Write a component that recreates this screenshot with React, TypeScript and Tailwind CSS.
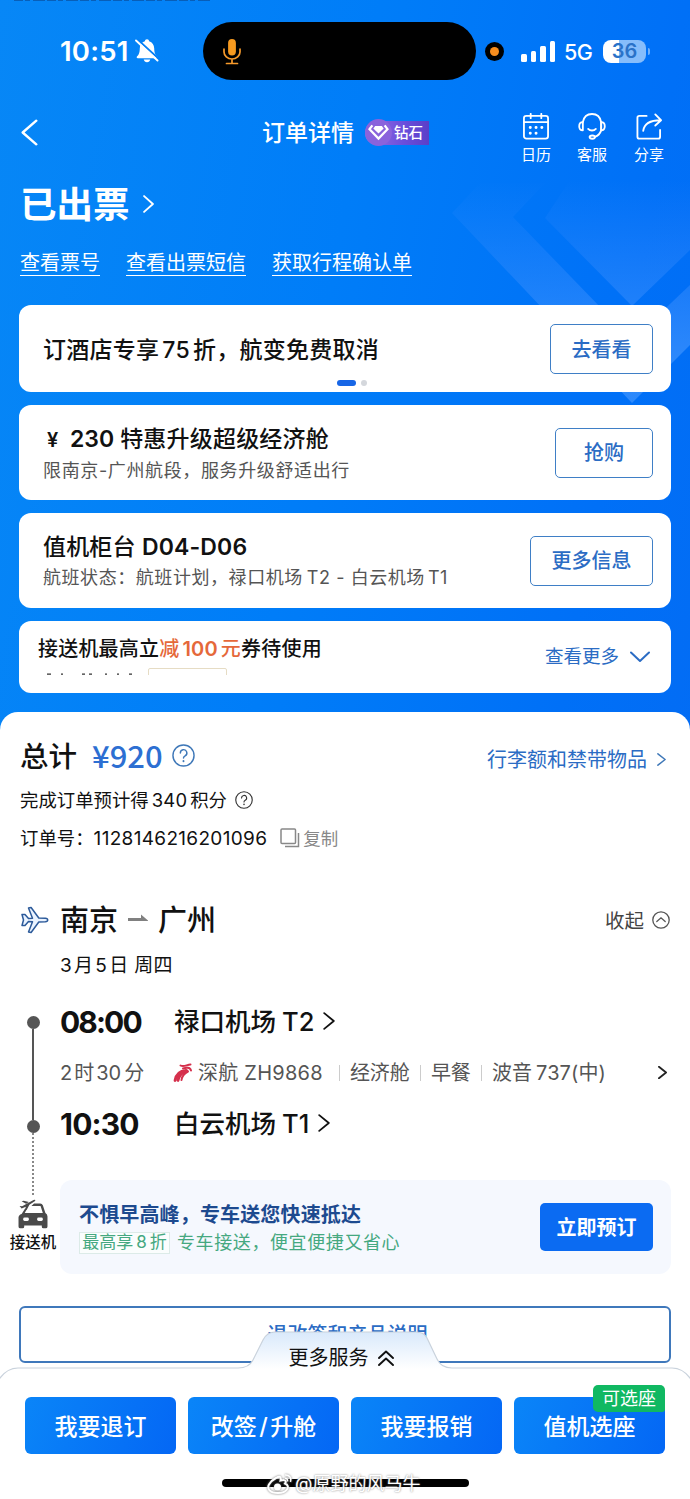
import type { ReactNode } from "react";

const chevronPaths = {
  left: "M9 1 L1 8 L9 15",
  right: "M1 1 L9 8 L1 15",
};

function Chevron({ dir = "right", className, stroke = 1.5 }: { dir?: "left" | "right"; className: string; stroke?: number }) {
  return (
    <svg viewBox="0 0 10 16" preserveAspectRatio="none" className={className} fill="none" stroke="currentColor" strokeWidth={stroke} strokeLinecap="round" strokeLinejoin="round">
      <path d={chevronPaths[dir]} vectorEffect="non-scaling-stroke" />
    </svg>
  );
}

function Question({ className }: { className: string }) {
  return (
    <svg viewBox="0 0 24 24" className={className} fill="none" stroke="currentColor" strokeWidth="1.5" strokeLinecap="round">
      <circle cx="12" cy="12" r="11" />
      <path d="M8.7 9.3 a3.4 3.4 0 1 1 5 3 c-1.2 .7 -1.7 1.2 -1.7 2.4" />
      <path d="M12 17.8 v.2" strokeWidth="2" />
    </svg>
  );
}

function StatusBar() {
  return (
    <div className="mt-[22px] flex h-[58px] items-center pl-[60px] text-white">
      <span className="w-[75px] text-[27.5px] font-semibold leading-8 tracking-[0.2px]">10:51</span>
      <svg viewBox="0 0 24 26" className="h-[26px] w-[24px]">
        <path d="M12 1.2 c1.3 0 2 .9 2.1 2 c3.4 1 5 3.700 5.1 7 c.1 4.500 .9 6.300 2.700 8.100 c.9 .9 .4 1.900 -.7 1.900 H2.800 c-1.100 0 -1.600 -1 -.7 -1.900 c1.800 -1.800 2.600 -3.600 2.700 -8.100 c.1 -3.300 1.700 -6 5.100 -7 c.1 -1.100 .8 -2 2.100 -2z" fill="white" />
        <path d="M8.700 21.600 h6.600 c-.4 1.600 -1.600 2.600 -3.300 2.600 s-2.900 -1 -3.300 -2.600z" fill="white" />
        <path d="M2.500 1.500 L24 21" stroke="#0580f7" strokeWidth="2" />
        <path d="M1 2.500 L22.500 22.500" stroke="white" strokeWidth="1.900" strokeLinecap="round" />
      </svg>
      <div className="ml-[44px] flex h-[58px] w-[273px] items-center rounded-full bg-black pl-[20px]">
        <svg viewBox="0 0 18 27" className="h-[27px] w-[18px]" fill="none" stroke="#f79a2b" strokeWidth="1.7" strokeLinecap="round">
          <rect x="5.100" y="1" width="7.800" height="16.500" rx="3.900" fill="#f79a1f" stroke="none" />
          <path d="M1 11 v3 a8 7 0 0 0 16 0 v-3 M9 21 v4 M3.500 25.500 h11" />
        </svg>
      </div>
      <div className="ml-[9px] flex size-[19px] items-center justify-center rounded-full bg-black">
        <div className="size-[9px] rounded-full bg-[#f78d1e]" />
      </div>
      <div className="ml-[17px] flex h-[21px] items-end gap-[4px]">
        <div className="h-[8px] w-[5.500px] rounded-[1.500px] bg-white" />
        <div className="h-[11px] w-[5.500px] rounded-[1.500px] bg-white" />
        <div className="h-[16px] w-[5.500px] rounded-[1.500px] bg-white" />
        <div className="h-[21px] w-[5.500px] rounded-[1.500px] bg-white" />
      </div>
      <span className="ml-[9px] w-[39px] pt-[2px] text-[21.500px] font-medium leading-7 tracking-[-0.500px]">5G</span>
      <div className="flex h-[23px] w-[43px] items-center justify-center rounded-[8px] bg-[linear-gradient(90deg,#fff_0,#fff_37%,#86bdfb_37%)]">
        <span className="text-[20px] font-semibold leading-none text-[#2a72c8]">36</span>
      </div>
      <div className="ml-[2px] h-[7px] w-[2px] rounded-r-full bg-[#6fb0fb]" />
    </div>
  );
}

function ToolItem({ label, children, className }: { label: string; children: ReactNode; className: string }) {
  return (
    <div className={className}>
      {children}
      <span className="mt-[6px] text-[15px] leading-[18px]">{label}</span>
    </div>
  );
}

function NavBar() {
  return (
    <div className="mt-[25px] flex h-[60px] text-white">
      <Chevron dir="left" stroke={2.4} className="ml-[21px] mt-[14px] h-[27px] w-[17px]" />
      <span className="ml-[224px] mt-[12px] w-[103px] text-[23px] font-medium leading-8">订单详情</span>
      <div className="mt-[14px] flex h-[27px] w-[64px] items-center">
        <div className="flex h-[24px] w-full items-center rounded-l-full rounded-r-[3px] bg-[linear-gradient(90deg,#9a6fe0,#6a4fdc_60%,#5b3fc8)]">
          <div className="flex size-[27px] shrink-0 items-center justify-center rounded-full bg-[#8a63dc]">
            <svg viewBox="0 0 22 18" className="h-[17px] w-[21px]" fill="white">
              <path d="M7.500 2 h7 l2 2.700 -5.500 5.300 -5.500 -5.300z" />
              <path d="M4.500 1.500 L1.500 5.500 11 15.500 20.500 5.500 17.500 1.500" fill="none" stroke="white" strokeWidth="2.400" />
            </svg>
          </div>
          <span className="ml-[2px] text-[14.500px] font-medium leading-5">钻石</span>
        </div>
      </div>
      <ToolItem label="日历" className="ml-[92px] mt-[8px] flex w-[30px] flex-col items-center whitespace-nowrap">
        <svg viewBox="0 0 28 28" className="h-[27px] w-[28px] shrink-0" fill="none" stroke="white" strokeWidth="1.900" strokeLinecap="round">
          <rect x="1.500" y="3" width="25" height="23.500" rx="2.500" />
          <path d="M1.500 9.500 h25 M8.500 .9 v4.500 M19.500 .9 v4.500" />
          <path d="M8 15 h.1 M14 15 h.1 M20 15 h.1 M8 21 h.1 M14 21 h.1" strokeWidth="3" />
        </svg>
      </ToolItem>
      <ToolItem label="客服" className="ml-[26px] mt-[8px] flex w-[30px] flex-col items-center whitespace-nowrap">
        <svg viewBox="0 0 30 28" className="h-[27px] w-[30px] shrink-0" fill="none" stroke="white" strokeWidth="1.900" strokeLinecap="round" strokeLinejoin="round">
          <path d="M5.500 9.500 C6.500 4 10 1 15 1 s8.500 3 9.500 8.500 v8.500 c-1 3 -3 5.500 -6.500 6.700" />
          <path d="M5.500 9.500 c-5 0 -5 8.500 0 8.500z M24.500 9.500 c5 0 5 8.500 0 8.500z" />
          <path d="M11 16.500 c2 2.200 6 2.200 8 0" />
          <ellipse cx="15.300" cy="25" rx="2.800" ry="1.700" />
        </svg>
      </ToolItem>
      <ToolItem label="分享" className="ml-[27px] mt-[8px] flex w-[30px] flex-col items-center whitespace-nowrap">
        <svg viewBox="0 0 28 28" className="h-[27px] w-[28px] shrink-0" fill="none" stroke="white" strokeWidth="1.900" strokeLinecap="round" strokeLinejoin="round">
          <path d="M11.500 3 H4 a2 2 0 0 0 -2 2 v19.500 a2 2 0 0 0 2 2 h19.500 a2 2 0 0 0 2 -2 V17.500" />
          <path d="M8 18.500 C9 11 15 7.500 26 7.500 M20.500 1.500 L26.500 7.500 20.500 13" />
        </svg>
      </ToolItem>
    </div>
  );
}

function OutlineButton({ children, className }: { children: ReactNode; className: string }) {
  return (
    <button className={`flex shrink-0 items-center justify-center rounded-[5px] border-[1.500px] border-[#3f7fc6] pt-px text-[20px] font-medium leading-7 text-[#2b6cc4] ${className}`}>
      {children}
    </button>
  );
}

function Cards() {
  return (
    <div className="mt-[29px] flex flex-col px-[19px] text-[#111]">
      <section className="flex h-[87px] flex-col rounded-[12px] bg-white">
        <div className="flex h-[69px] items-end justify-between pl-[24px] pr-[18px]">
          <h2 className="mb-[8px] whitespace-nowrap text-[23px] font-medium leading-8 tracking-[0.250px]">
            订酒店专享<span className="mx-[3px]">75</span>折，航变免费取消
          </h2>
          <OutlineButton className="h-[50px] w-[103px]">去看看</OutlineButton>
        </div>
        <div className="mt-[6px] flex items-center gap-[5px] pl-[318px]">
          <i className="h-[6px] w-[19px] rounded-full bg-[#1766e6]" />
          <i className="size-[6px] rounded-full bg-[#d4d7dc]" />
        </div>
      </section>
      <section className="mt-[13px] flex h-[95px] items-center justify-between rounded-[12px] bg-white pl-[24px] pr-[18px]">
        <div className="whitespace-nowrap">
          <h2 className="pt-px text-[23px] font-medium leading-[34px]">
            <span className="ml-[4px] inline-block w-[23px] text-[20px] font-semibold">¥</span><span className="font-semibold">230</span><span className="ml-[6px] tracking-[0.200px]">特惠升级超级经济舱</span>
          </h2>
          <p className="text-[18px] leading-[28px] tracking-[0.630px] text-[#555]">限南京-广州航段，服务升级舒适出行</p>
        </div>
        <OutlineButton className="h-[50px] w-[98px]">抢购</OutlineButton>
      </section>
      <section className="mt-[13px] flex h-[95px] items-center justify-between rounded-[12px] bg-white pl-[24px] pr-[18px]">
        <div className="whitespace-nowrap">
          <h2 className="pt-px text-[23px] font-medium leading-[34px] tracking-[0.150px]">值机柜台 <span className="font-semibold">D04-D06</span></h2>
          <p className="text-[18px] leading-[28px] tracking-[0.560px] text-[#555]">航班状态：航班计划，禄口机场<span className="ml-[4px]">T2 - </span>白云机场<span className="ml-[3px]">T1</span></p>
        </div>
        <OutlineButton className="h-[50px] w-[123px]">更多信息</OutlineButton>
      </section>
      <section className="mt-[13px] flex h-[72px] justify-between rounded-[12px] bg-white pl-[19px] pr-[21px]">
        <div className="h-[54px] overflow-hidden whitespace-nowrap">
          <h2 className="pt-[13px] text-[20px] font-medium leading-[30px] tracking-[0.200px]">
            接送机最高立<span className="font-medium text-[#e5683a]">减<span className="mx-[3px] font-semibold">100</span>元</span>券待使用
          </h2>
          <div className="mt-[4px] flex gap-[12px]">
            <svg viewBox="0 0 98 8" className="h-[8px] w-[98px]" stroke="#333" strokeWidth="1.200">
              <path d="M9 6.200 h4 M23 6.200 h2 M44 6.200 h3 M51 6.200 h3 M67 6.200 h2 M79 6.200 h2 M91 6.200 h3" />
            </svg>
            <div className="h-[20px] w-[79px] rounded-[2px] border border-[#e6dcc4]" />
          </div>
        </div>
        <div className="flex items-center text-[18.500px] text-[#2b6cc4]">
          查看更多
          <svg viewBox="0 0 20 12" className="ml-[11px] h-[12px] w-[20px]" fill="none" stroke="currentColor" strokeWidth="2" strokeLinecap="round" strokeLinejoin="round">
            <path d="M1 1.500 L10 10 19 1.500" />
          </svg>
        </div>
      </section>
    </div>
  );
}

function OrderSummary() {
  return (
    <div className="px-[20px]">
      <div className="flex h-[40px] items-center whitespace-nowrap">
        <span className="text-[28.500px] font-medium leading-10">总计</span>
        <span className="ml-[15px] pb-[5px] font-['Noto_Sans_CJK_SC'] text-[31px] font-medium leading-10 text-[#2d6fd2]">¥920</span>
        <Question className="mb-[3px] ml-[9px] size-[23px] text-[#3f78b8]" />
        <a className="ml-auto mt-[5px] text-[20px] leading-7 text-[#2b6cc4]">行李额和禁带物品</a>
        <Chevron className="ml-[10px] mr-[4px] mt-[4px] h-[13px] w-[9px] text-[#3f78b8]" />
      </div>
      <div className="mt-[9px] flex h-[30px] items-center whitespace-nowrap text-[18.400px]">
        完成订单预计得<span className="mx-[3px] tracking-[0.200px]">340</span>积分
        <Question className="mb-[2px] ml-[8px] size-[18px] text-[#333]" />
      </div>
      <div className="mt-[8px] flex h-[30px] items-center whitespace-nowrap text-[18.400px]">
        订单号：<span className="text-[19px] tracking-[0.320px]">1128146216201096</span>
        <svg viewBox="0 0 20 20" className="mb-[2px] ml-[13px] size-[20px] text-[#888]" fill="none" stroke="currentColor" strokeWidth="1.500">
          <rect x="1" y="1" width="14.500" height="14.500" rx="1" />
          <path d="M18.500 5 v13.500 H5" />
        </svg>
        <span className="ml-[3px] text-[17.500px] text-[#888]">复制</span>
      </div>
    </div>
  );
}

function FlightHeader() {
  return (
    <div className="mt-[47px] px-[20px]">
      <div className="flex h-[40px] items-center">
        <svg viewBox="0 0 30 28" className="mb-[3px] h-[28px] w-[30px]" fill="#eaf3ff" stroke="#2c5a9a" strokeWidth="1.500" strokeLinejoin="round">
          <path d="M2 8.500 l3 0 3.500 4 4 -.2 -4 -10.300 2.600 -.5 7.700 10.500 6.500 .2 c3.200 .2 3.200 3.400 0 3.600 l-6.500 .2 -7.700 10.500 -2.600 -.5 4 -10.300 -4 -.2 -3.500 4 -3 0 1.500 -5.500z" />
        </svg>
        <span className="ml-[10px] text-[29px] font-medium leading-10">南京</span>
        <svg viewBox="0 0 20 8" className="mb-[6px] ml-[10px] h-[8px] w-[20px]" fill="#808080">
          <path d="M0 4 H13 V.5 L20.500 7 H0z" />
        </svg>
        <span className="ml-[10px] text-[29px] font-medium leading-10">广州</span>
        <span className="mb-px ml-auto text-[19.500px] leading-7 text-[#444]">收起</span>
        <svg viewBox="0 0 18 18" className="mb-[3px] ml-[8px] size-[18px]" fill="none" stroke="#555" strokeWidth="1.300" strokeLinecap="round">
          <circle cx="9" cy="9" r="8.200" />
          <path d="M4.800 10.500 L9 6.800 13.200 10.500" />
        </svg>
      </div>
      <p className="ml-[40px] mt-[10px] text-[19px] leading-[30px] tracking-[0.300px]">
        3<span className="mx-[2px]">月</span>5<span className="ml-[2px]">日</span> 周四
      </p>
    </div>
  );
}

function Separator() {
  return <i className="h-[16px] w-px bg-[#ccc]" />;
}

function Itinerary() {
  return (
    <div className="mt-[21px] flex">
      <div className="flex w-[60px] shrink-0 flex-col items-center pl-[6px] pt-[14px]">
        <i className="size-[13px] shrink-0 rounded-full bg-[#555]" />
        <i className="h-[91px] w-[2px] bg-[#555]" />
        <i className="size-[13px] shrink-0 rounded-full bg-[#555]" />
        <i className="h-[62px] w-0 border-l-2 border-dotted border-[#888]" />
        <svg viewBox="0 0 29 29" className="mt-[4px] size-[30px]" fill="#4a4a4a">
          <path d="M3.500 14.500 L7 9 8.500 10 6.500 13.500 H24 L21.800 6.800 H13 L15.500 4.300 H21.500 Q23.300 4.300 24 6 L26.500 13.500 Q28.500 14.500 28.500 17 V26.500 Q28.500 28.300 26.800 28.300 H24.500 Q23 28.300 23 26.800 V25.500 H6 V26.800 Q6 28.300 4.500 28.300 H2.200 Q.5 28.300 .5 26.500 V18 Q.5 15.500 3.500 14.500z" />
          <rect x="5" y="18" width="5.500" height="3.300" rx="1.400" fill="#fff" />
          <rect x="18.500" y="18" width="5.500" height="3.300" rx="1.400" fill="#fff" />
          <path d="M1.500 6.800 L4 7 15 .9 Q17.500 .2 16.500 2 L11 5.500 8.500 10.500 7 10.500 7.500 7.500 3.500 9.300z M3.500 2.200 L5.500 1.600 10.500 3 7.800 4.600z" />
        </svg>
        <span className="mt-[4px] whitespace-nowrap text-[15.500px] font-medium leading-5">接送机</span>
      </div>
      <div className="w-[611px] whitespace-nowrap">
        <div className="flex h-[40px] items-center">
          <span className="w-[114px] text-[30px] font-bold leading-10 tracking-[-1.900px]">08:00</span>
          <span className="mb-px text-[25.500px] font-medium leading-10">禄口机场<span className="ml-[6px]">T2</span></span>
          <Chevron className="mb-[3px] ml-[9px] h-[18px] w-[12px]" stroke={1.8} />
        </div>
        <div className="mt-[15px] flex h-[32px] items-center text-[20px] text-[#555]">
          <span className="w-[113px]">2<span className="mx-[2px]">时</span>30<span className="ml-[3px]">分</span></span>
          <svg viewBox="0 0 20 20" className="mr-[5px] size-[20px]" fill="none" stroke="#d5304c" strokeLinecap="round">
            <path d="M2 17.500 C3 12 7 8 13 7.500 M5 17.500 C6 13 9 9.500 14 8" strokeWidth="2.800" />
            <path d="M8.500 17 C9 13 11 10.500 15 8.500 M7.500 2.500 C11 4.500 14 1.500 17.500 1.500 M10 5.500 C13 4.500 17 4 18 7.500" strokeWidth="2" />
          </svg>
          <span className="tracking-[0.250px]">深航 ZH9868</span>
          <div className="ml-[16px] flex items-center gap-[10px]">
            <Separator />
            <span>经济舱</span>
            <Separator />
            <span>早餐</span>
            <Separator />
            <span className="tracking-[0.100px]">波音<span className="ml-[4px]">737(</span>中)</span>
          </div>
          <Chevron className="mb-[1px] ml-auto mr-[4px] h-[13px] w-[9px] text-[#222]" stroke={1.8} />
        </div>
        <div className="mt-[15px] flex h-[40px] items-center">
          <span className="w-[114px] text-[30px] font-bold leading-10 tracking-[-0.800px]">10:30</span>
          <span className="mb-px text-[25.500px] font-medium leading-10">白云机场<span className="ml-[6px]">T1</span></span>
          <Chevron className="mb-[2px] ml-[9px] h-[18px] w-[12px]" stroke={1.8} />
        </div>
        <div className="mt-[36px] flex h-[94px] items-center justify-between rounded-[12px] bg-[#f5f8fe] pl-[19px] pr-[18px]">
          <div className="pt-[3px]">
            <h3 className="text-[20px] font-bold leading-7 tracking-[0.150px] text-[#1d4a8f]">不惧早高峰，专车送您快速抵达</h3>
            <div className="flex h-[28px] items-center text-[18px] text-[#45a880]">
              <span className="flex h-[22px] w-[91px] items-center justify-center border border-[#dcebe8] bg-[#fafdfd] text-[17px]">最高享<span className="mx-[3px]">8</span>折</span>
              <span className="ml-[7px] tracking-[0.600px]">专车接送，便宜便捷又省心</span>
            </div>
          </div>
          <button className="h-[48px] w-[113px] rounded-[5px] bg-[#0b6bf2] pt-[2px] text-[20px] font-semibold text-white">立即预订</button>
        </div>
      </div>
    </div>
  );
}

const actions: { label: ReactNode; badge?: string }[] = [
  { label: "我要退订" },
  { label: <>改签<span className="mx-[2.500px]">/</span>升舱</> },
  { label: "我要报销" },
  { label: "值机选座", badge: "可选座" },
];

function BottomSheet() {
  return (
    <div className="absolute inset-x-0 bottom-0 h-[168px]">
      <svg viewBox="0 0 690 168" className="absolute inset-0 h-[168px] w-[690px]">
        <defs>
          <linearGradient id="tab" x1="0" y1="0" x2="0" y2="1">
            <stop offset="0" stopColor="#d9e9fb" />
            <stop offset=".22" stopColor="#ffffff" />
          </linearGradient>
        </defs>
        <path d="M-2 50 Q6 37 18 37 H238 Q249 37 253 29 L263 9 Q267 1 275 1 H416 Q424 1 427 7 L437 28 Q441 37 452 37 H672 Q684 37 692 50 V170 H-2z" fill="url(#tab)" stroke="#c9d2dc" strokeWidth="1.200" />
      </svg>
      <div className="relative flex h-full flex-col">
        <div className="flex h-[52px] items-center justify-center pr-[8px] pt-[2px] text-[20px]">
          更多服务
          <svg viewBox="0 0 16 16" className="ml-[9px] size-[16px]" fill="none" stroke="#111" strokeWidth="1.900" strokeLinecap="round" strokeLinejoin="round">
            <path d="M1 8 L8 1.500 15 8 M1 15 L8 8.500 15 15" />
          </svg>
        </div>
        <div className="mt-[14px] flex gap-[12px] px-[25px]">
          {actions.map((a, i) => (
            <button key={i} className="relative h-[57px] w-[151px] rounded-[6px] bg-[linear-gradient(110deg,#0a85f8,#0467f5)] pt-[3px] text-[23px] font-medium text-white">
              {a.label}
              {a.badge && (
                <span className="absolute right-0 top-[-12px] h-[27px] w-[72px] rounded-[5px] rounded-br-[3px] bg-[#10b862] text-[18px] font-normal leading-[28px]">{a.badge}</span>
              )}
            </button>
          ))}
        </div>
        <div className="mx-auto mt-[25px] h-[8px] w-[247px] rounded-full bg-black" />
      </div>
      <div className="absolute bottom-[1px] left-[267px] flex items-center whitespace-nowrap text-[18px] leading-[28px] text-white [text-shadow:0_0_2px_#777]">
        <svg viewBox="0 0 26 22" className="mr-[2px] h-[22px] w-[26px] drop-shadow-[0_0_1px_#777]" fill="none" stroke="white" strokeWidth="2">
          <path d="M9 5 C14 2 14 5 13.500 7.500 C18 6 20 8 18 10.500 C24 13 20 20 11 20 C2 20 0 15 2 11.500 C4 8 6 6.500 9 5z" />
          <circle cx="10.500" cy="14" r="3.500" fill="white" stroke="none" />
          <path d="M18 2 C22 1.500 25 5 23.500 9 M18 5.500 C20 5.300 21 6.500 20.500 8.500" strokeWidth="1.500" />
        </svg>
        @原野的风马牛
      </div>
    </div>
  );
}

export default function App() {
  return (
    <main className="relative flex h-[1499px] w-[690px] flex-col overflow-hidden bg-[linear-gradient(100deg,#0787f6_0%,#007df8_40%,#0070f7_72%,#0569f2_100%)] font-['Inter','Noto_Sans_CJK_SC',sans-serif] text-[#111]">
      <svg viewBox="0 0 690 420" className="absolute left-0 top-0 h-[420px] w-[690px]">
        <defs>
          <linearGradient id="fade" x1="0" y1="180" x2="0" y2="360" gradientUnits="userSpaceOnUse">
            <stop offset="0" stopColor="#4a90ff" stopOpacity="0" />
            <stop offset="1" stopColor="#4a9aff" stopOpacity="0.6" />
          </linearGradient>
        </defs>
        <path d="M14 .5 H210" stroke="#0a4f9e" strokeWidth="1.200" strokeDasharray="9 2 5 3 12 2" opacity=".7" />
        <path d="M480 183 L452 213 632 403 690 345 V285 L632 340 513 217 545 183z" fill="url(#fade)" />
        <path d="M570 180 L545 218 632 306 690 250 V180z" fill="url(#fade)" />
      </svg>
      <div className="relative flex flex-col">
        <StatusBar />
        <NavBar />
        <div className="mt-[15px] flex h-[50px] items-center pl-[20px] text-white">
          <h1 className="text-[36.500px] font-bold leading-[50px]">已出票</h1>
          <Chevron className="mb-[3px] ml-[13px] h-[18px] w-[11px]" stroke={1.9} />
        </div>
        <nav className="mt-[22px] flex gap-[26px] pl-[20px] text-[20px] leading-[23px] text-white">
          <a className="border-b-[1.500px] border-white">查看票号</a>
          <a className="border-b-[1.500px] border-white">查看出票短信</a>
          <a className="border-b-[1.500px] border-white">获取行程确认单</a>
        </nav>
        <Cards />
      </div>
      <div className="relative mt-[19px] flex-1 rounded-t-[18px] bg-white pt-[25px]">
        <OrderSummary />
        <FlightHeader />
        <Itinerary />
        <div className="mx-[19px] mt-[32px] flex h-[57px] items-center justify-center rounded-[6px] border-2 border-[#3f78bb] pl-[5px] text-[20px] font-medium leading-7 text-[#2b6cc4]">
          退改签和产品说明
        </div>
      </div>
      <BottomSheet />
    </main>
  );
}
